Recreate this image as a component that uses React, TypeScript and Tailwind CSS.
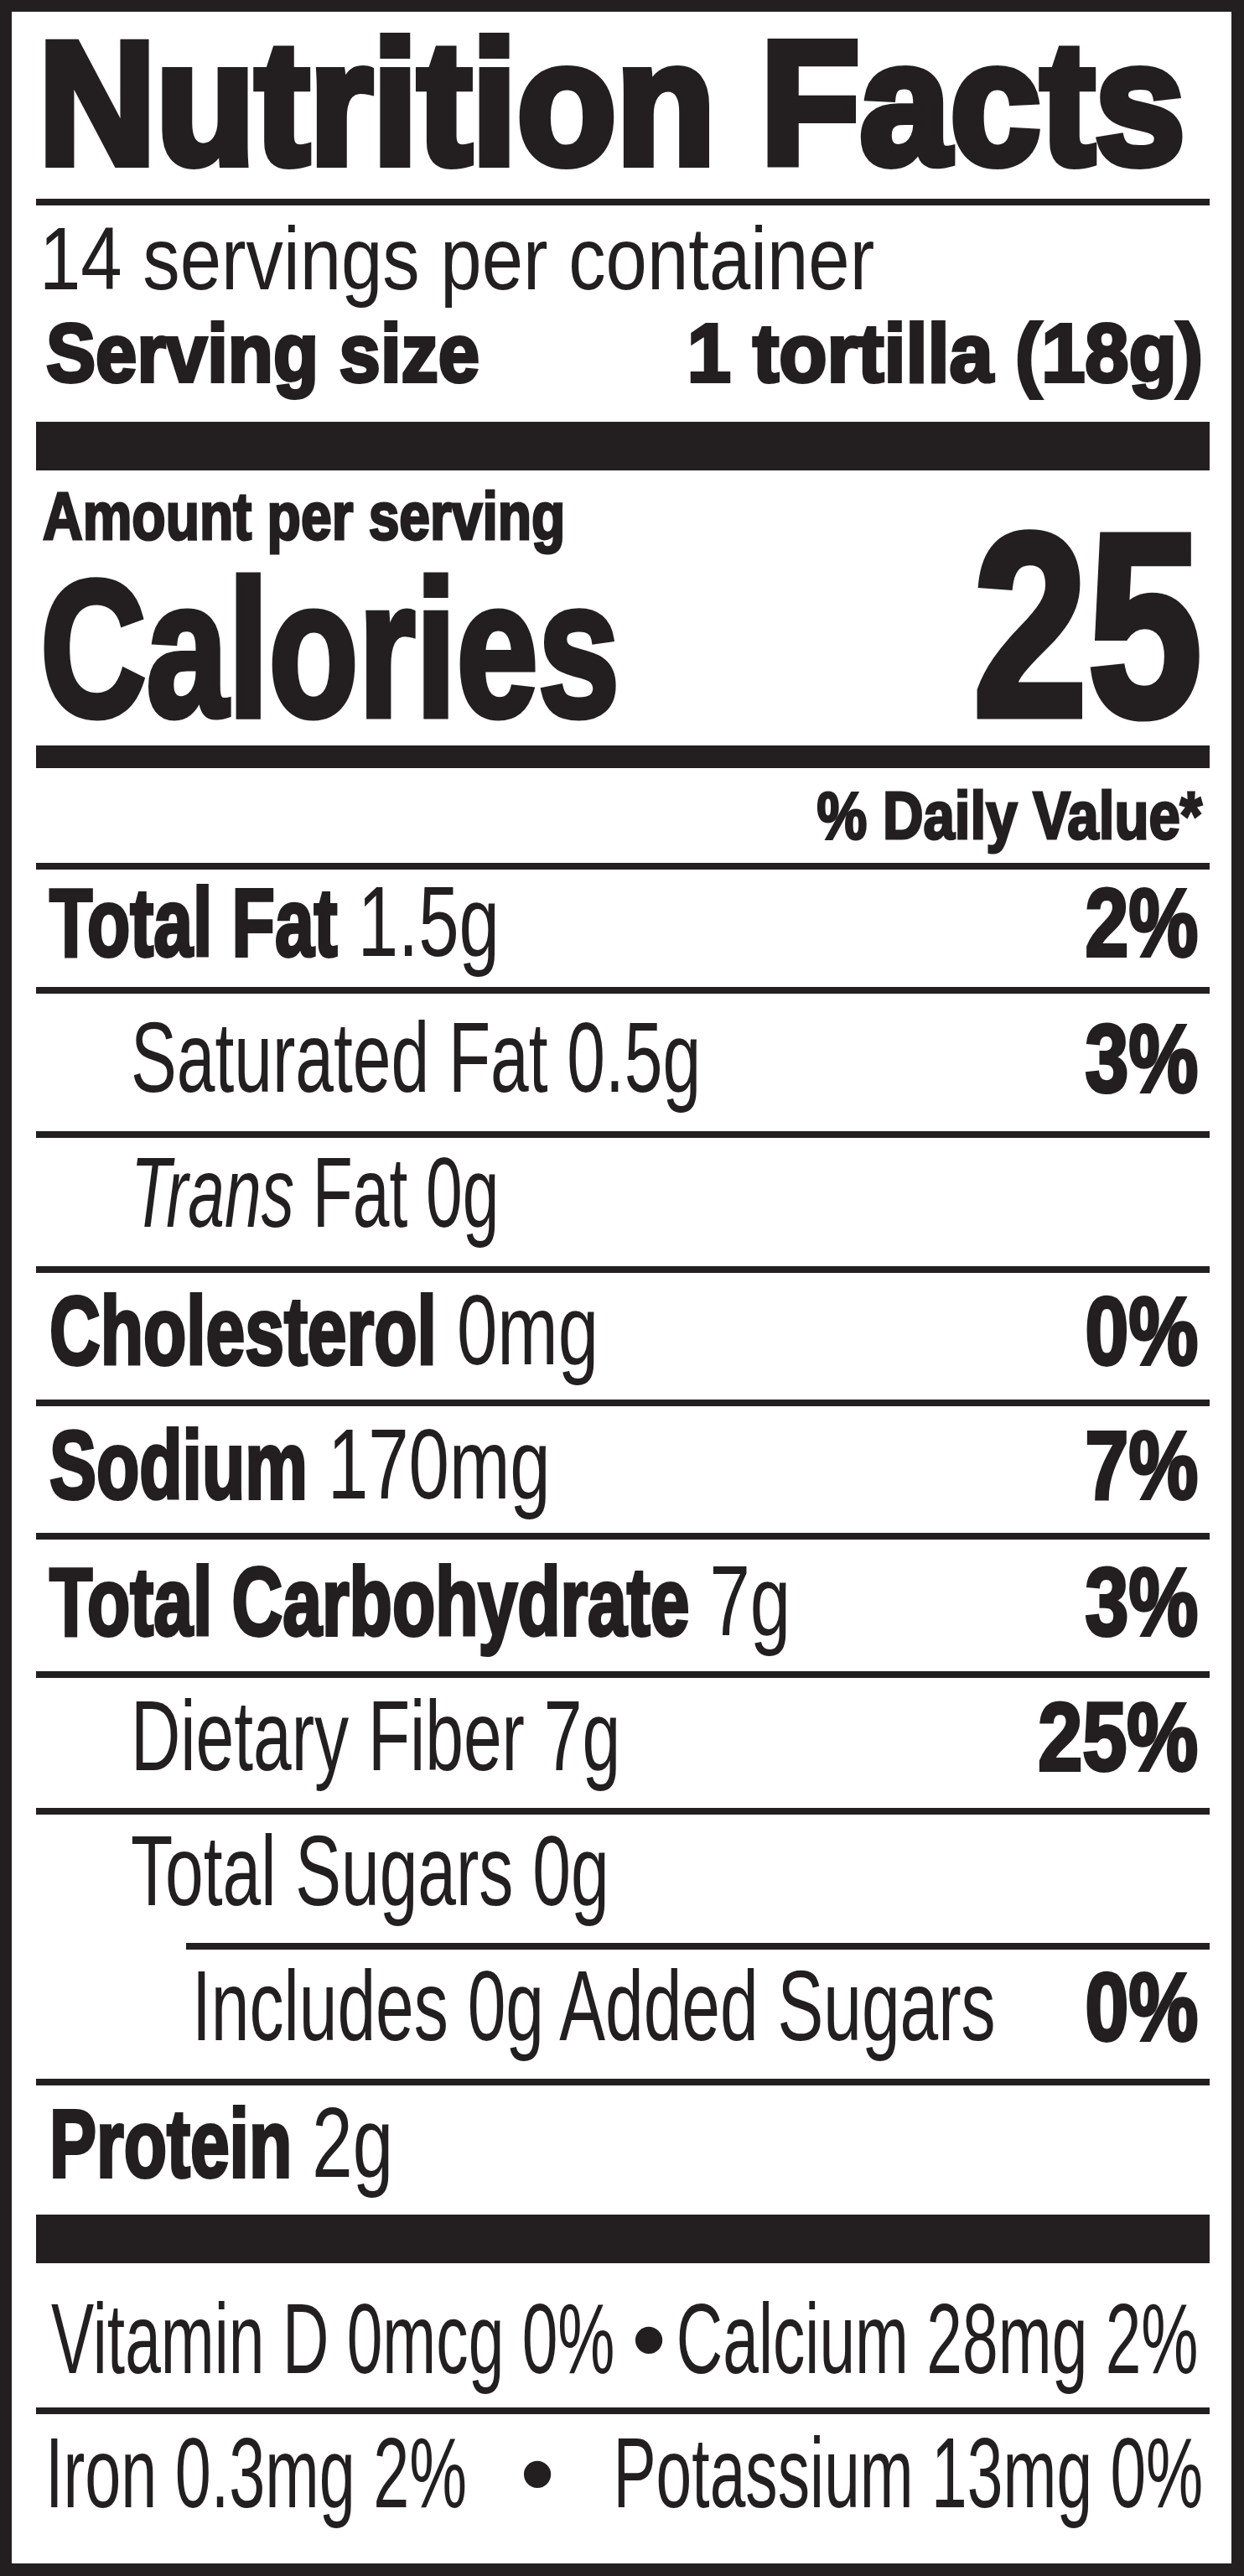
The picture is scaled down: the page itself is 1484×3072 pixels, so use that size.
import React from 'react'

// shared bits
const stroke3 = '[-webkit-text-stroke:3px_#231f20]'
const stroke4 = '[-webkit-text-stroke:4px_#231f20]'

function Rule({ className = '' }: any) {
  return <div className={`h-[8px] bg-[#231f20] ${className}`} />
}

function Bold({ children }: any) {
  return <b className={`font-bold text-[115px] ${stroke4}`}>{children}</b>
}

// one nutrient line: label on the left, % daily value on the right
function Row({ cls, left, right, ls = 'scale-x-[0.73]', rs = 'scale-x-[0.81]' }: any) {
  return (
    <div className={`flex items-baseline pr-[14px] text-[119px] leading-[120px] ${cls}`}>
      <div className="min-w-0 flex-1">
        <span className={`inline-block origin-left whitespace-nowrap ${ls}`}>{left}</span>
      </div>
      {right && (
        <span className={`inline-block shrink-0 origin-right whitespace-nowrap font-bold text-[115px] ${stroke4} ${rs}`}>
          {right}
        </span>
      )}
    </div>
  )
}

export default function App() {
  return (
    <div className="bg-white">
      <div className="h-[3072px] w-[1484px] overflow-hidden border-[#231f20] border-t-[14px] border-l-[14px] border-r-[15px] border-b-[15px] bg-white pl-[29px] pr-[26px] font-['Liberation_Sans',Arial,sans-serif] text-[#231f20]">
        {/* title */}
        <div className="pl-[3px] text-[208px] leading-[218px] font-bold [-webkit-text-stroke:10px_#231f20]">
          <span className="inline-block origin-left whitespace-nowrap scale-x-[0.932]">Nutrition Facts</span>
        </div>
        <Rule className="mt-[5px]" />

        <div className="pl-[4px] text-[105px] leading-[127px]">
          <span className="inline-block origin-left whitespace-nowrap scale-x-[0.845]">14 servings per container</span>
        </div>
        <div className={`flex items-baseline pl-[12px] pr-[8px] text-[99px] leading-[98px] font-bold ${stroke4}`}>
          <div className="min-w-0 flex-1">
            <span className="inline-block origin-left whitespace-nowrap scale-x-[0.895]">Serving size</span>
          </div>
          <span className="inline-block shrink-0 origin-right whitespace-nowrap scale-x-[0.948]">1 tortilla (18g)</span>
        </div>

        <div className="mt-[33px] h-[58px] bg-[#231f20]" />

        {/* calories */}
        <div className="flex items-end">
          <div className="flex min-w-0 flex-1 flex-col pb-[13px]">
            <div className={`pl-[8px] text-[80px] leading-[110px] font-bold ${stroke3}`}>
              <span className="inline-block origin-left whitespace-nowrap scale-x-[0.825]">Amount per serving</span>
            </div>
            <div className="pl-[5px] text-[232px] leading-[205px] font-bold [-webkit-text-stroke:7px_#231f20]">
              <span className="inline-block origin-left whitespace-nowrap scale-x-[0.755]">Calories</span>
            </div>
          </div>
          <div className="flex shrink-0 justify-end pr-[9px] text-[311px] leading-[288px] font-bold [-webkit-text-stroke:9px_#231f20]">
            <span className="inline-block origin-right whitespace-nowrap scale-x-[0.79]">25</span>
          </div>
        </div>

        <div className="h-[27px] bg-[#231f20]" />

        <div className={`flex justify-end pr-[9px] text-[80px] leading-[113px] font-bold ${stroke3}`}>
          <span className="inline-block shrink-0 origin-right whitespace-nowrap scale-x-[0.84]">% Daily Value*</span>
        </div>

        <Rule />
        <Row cls="h-[140px] pt-[2px] pl-[16px]" left={<><Bold>Total Fat</Bold> 1.5g</>} right="2%" />
        <Rule />
        <Row cls="h-[164px] pt-[16px] pl-[113px]" ls="scale-x-[0.69]" left="Saturated Fat 0.5g" right="3%" />
        <Rule />
        <Row cls="h-[153px] pt-[5px] pl-[113px]" ls="scale-x-[0.66]" left={<><i>Trans</i> Fat 0g</>} />
        <Rule />
        <Row cls="h-[151px] pt-[8px] pl-[16px]" left={<><Bold>Cholesterol</Bold> 0mg</>} right="0%" />
        <Rule />
        <Row cls="h-[151px] pt-[9px] pl-[16px]" left={<><Bold>Sodium</Bold> 170mg</>} right="7%" />
        <Rule />
        <Row cls="h-[157px] pt-[13px] pl-[16px]" left={<><Bold>Total Carbohydrate</Bold> 7g</>} right="3%" />
        <Rule />
        <Row cls="h-[155px] pt-[9px] pl-[113px]" ls="scale-x-[0.69]" left="Dietary Fiber 7g" right="25%" rs="scale-x-[0.83]" />
        <Rule />
        <Row cls="h-[153px] pt-[7px] pl-[113px]" ls="scale-x-[0.69]" left="Total Sugars 0g" />
        <Rule className="ml-[179px]" />
        <Row cls="h-[154px] pt-[7px] pl-[186px]" ls="scale-x-[0.69]" left="Includes 0g Added Sugars" right="0%" />
        <Rule />
        <Row cls="h-[154px] pt-[8px] pl-[16px]" left={<><Bold>Protein</Bold> 2g</>} />

        <div className="h-[58px] bg-[#231f20]" />

        {/* vitamins and minerals */}
        <div className="grid h-[172px] grid-cols-[710px_42px_1fr] items-baseline pt-[30px] text-[119px] leading-[120px]">
          <div className="min-w-0 pl-[18px]">
            <span className="inline-block origin-left whitespace-nowrap scale-x-[0.645]">Vitamin D 0mcg 0%</span>
          </div>
          <span className="text-center">•</span>
          <div className="flex min-w-0 justify-end pr-[13px]">
            <span className="inline-block shrink-0 origin-right whitespace-nowrap scale-x-[0.645]">Calcium 28mg 2%</span>
          </div>
        </div>
        <Rule />
        <div className="grid h-[178px] grid-cols-[577px_42px_1fr] items-baseline pt-[10px] text-[119px] leading-[120px]">
          <div className="min-w-0 pl-[11px]">
            <span className="inline-block origin-left whitespace-nowrap scale-x-[0.65]">Iron 0.3mg 2%</span>
          </div>
          <span className="text-center">•</span>
          <div className="flex min-w-0 justify-end pr-[8px]">
            <span className="inline-block shrink-0 origin-right whitespace-nowrap scale-x-[0.645]">Potassium 13mg 0%</span>
          </div>
        </div>
      </div>
    </div>
  )
}
